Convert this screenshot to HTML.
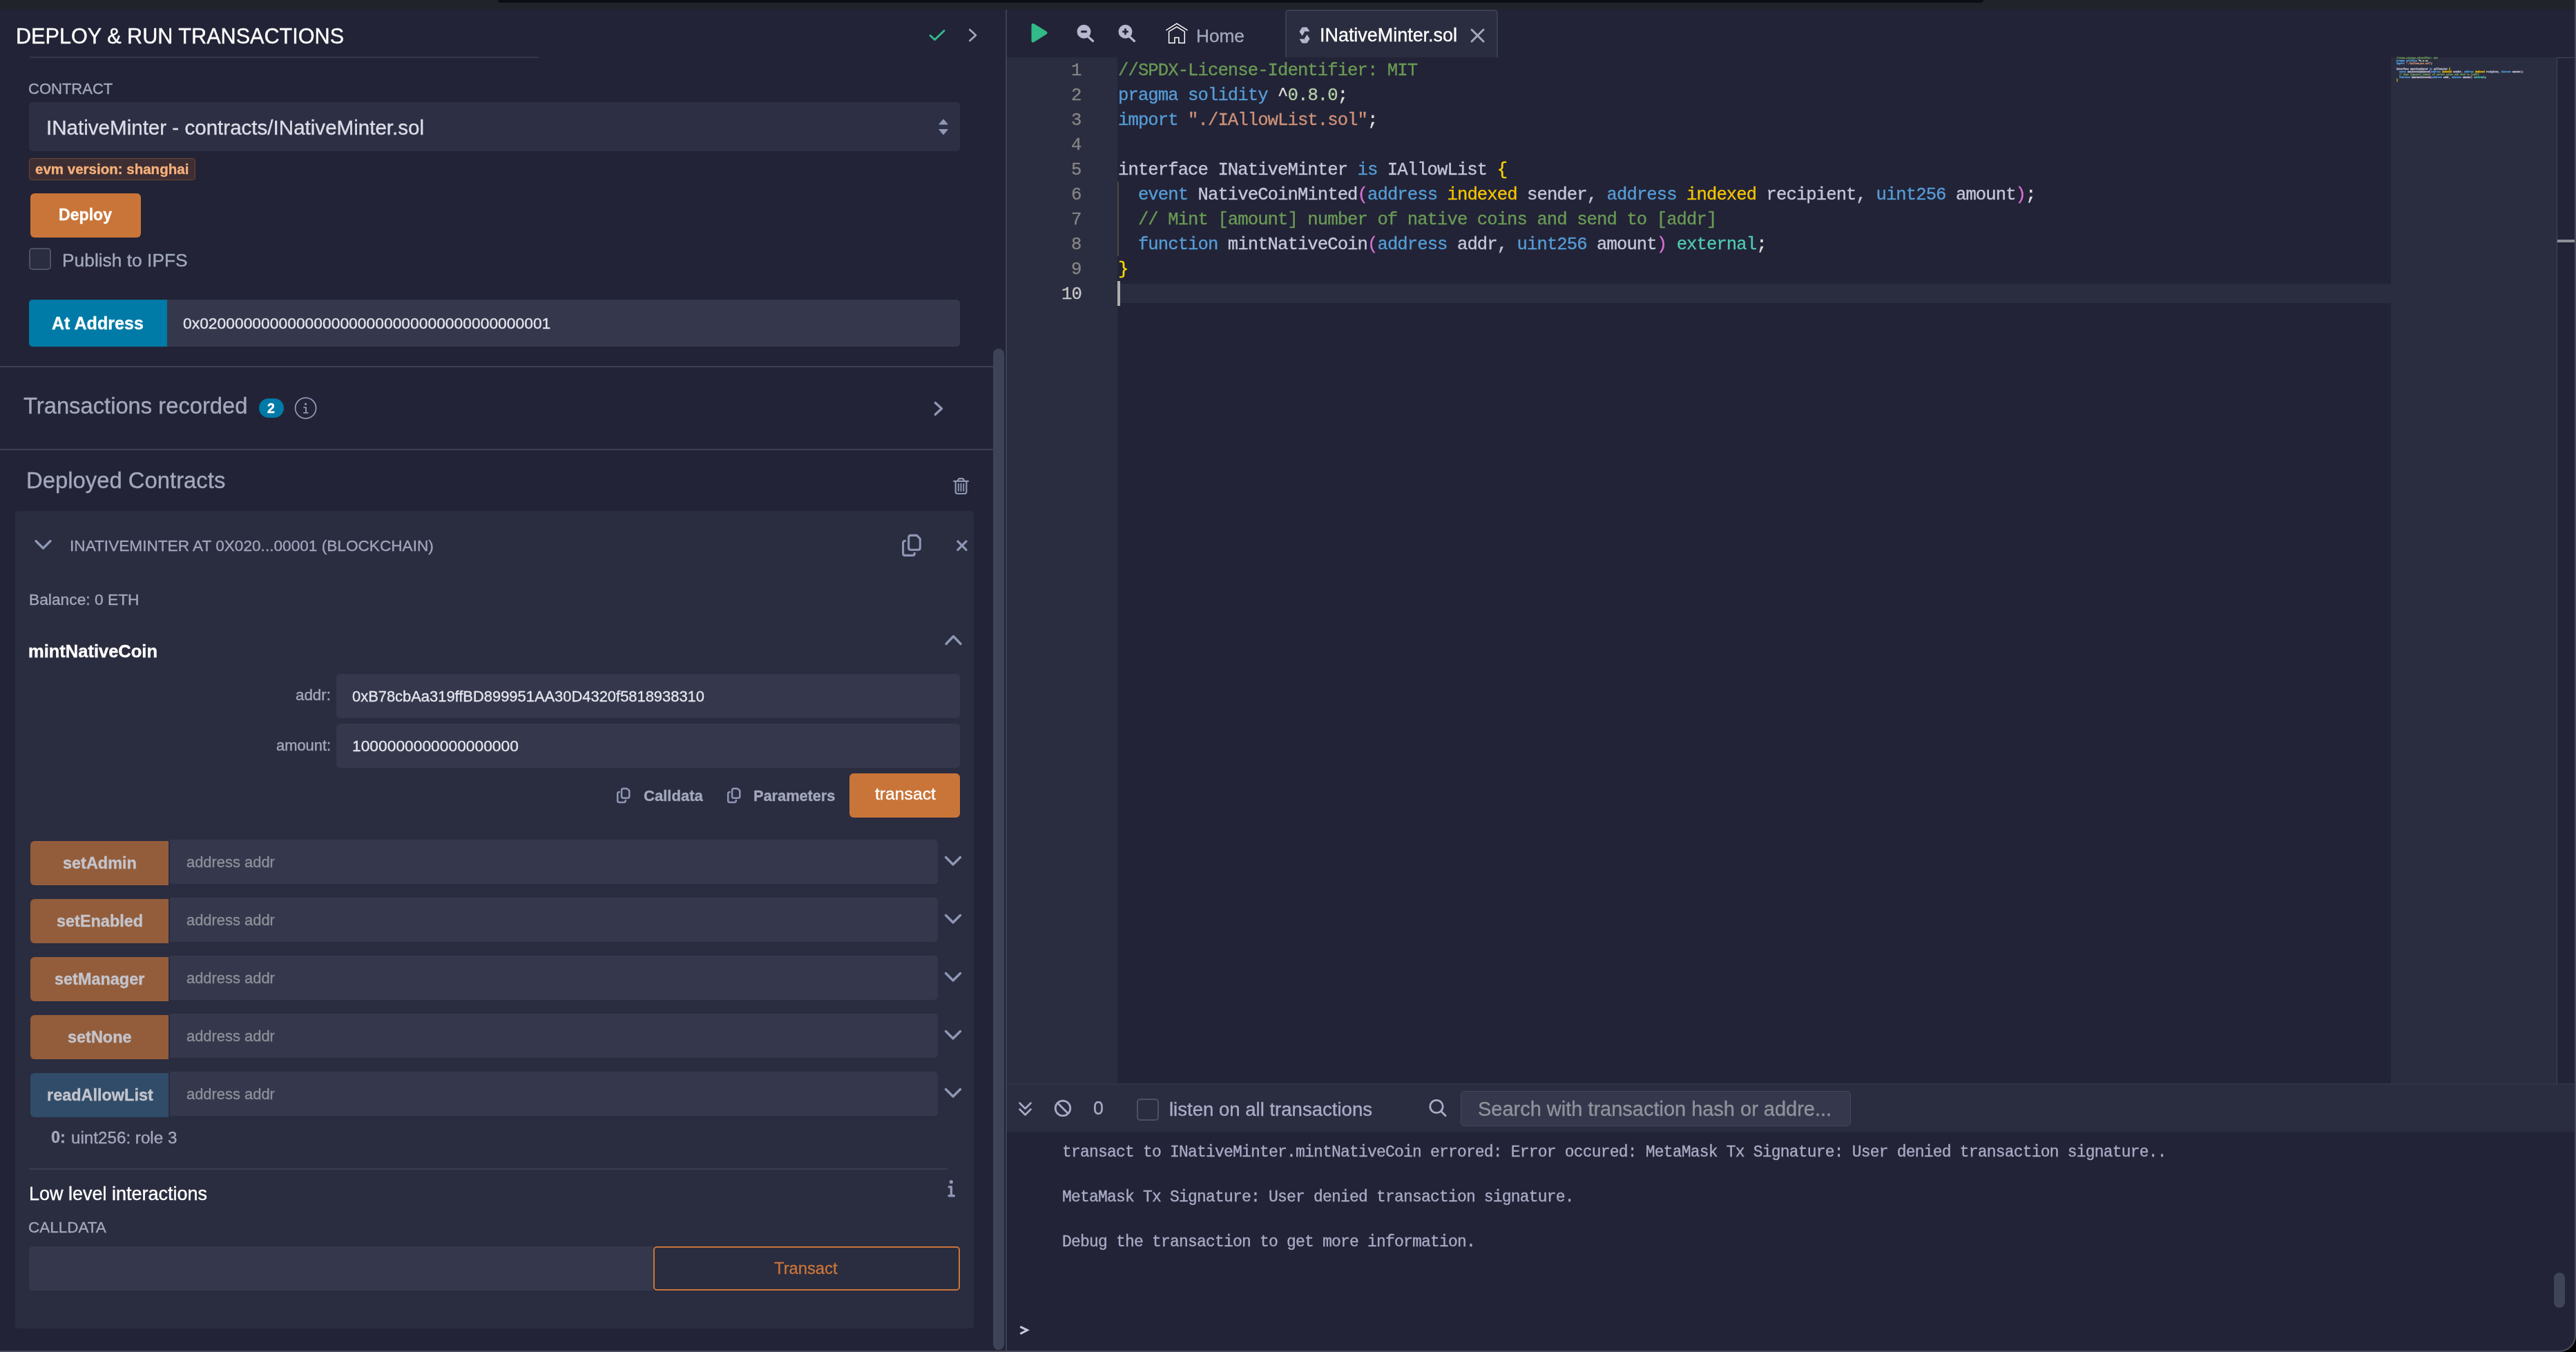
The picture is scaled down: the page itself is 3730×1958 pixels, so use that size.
<!DOCTYPE html>
<html><head><meta charset="utf-8">
<style>
*{margin:0;padding:0;box-sizing:border-box}
html,body{width:3730px;height:1958px;overflow:hidden;background:#000}
body{position:relative;font-family:"Liberation Sans",sans-serif}
.a{position:absolute}
.t{position:absolute;white-space:pre;line-height:1;will-change:transform;-webkit-text-stroke:0.35px currentColor}
svg{position:absolute;overflow:visible}
</style></head><body>
<div class="a" style="left:0px;top:0px;width:3730px;height:14px;background:#20232a;"></div>
<div class="a" style="left:721px;top:0px;width:2151px;height:4px;background:#0d0e13;border-radius:0 0 9px 9px"></div>
<div class="a" style="left:0;top:14px;width:3730px;height:1944px;background:#222336;border-bottom-right-radius:24px"></div>
<div class="t" style="left:23.2px;top:36.6px;font-size:30.61px;color:#ffffff;">DEPLOY &amp; RUN TRANSACTIONS</div>
<svg style="left:1345px;top:42px" width="24" height="18" viewBox="0 0 24 18"><path d="M2 9.5 L8.5 15.5 L22 2.5" fill="none" stroke="#32ba89" stroke-width="3" stroke-linecap="round" stroke-linejoin="round"/></svg>
<svg style="left:1402px;top:41px" width="14" height="20" viewBox="0 0 14 20"><path d="M2.2 2 L11 10 L2.2 18" fill="none" stroke="#a3a8bd" stroke-width="2.6" stroke-linecap="round" stroke-linejoin="round"/></svg>
<div class="a" style="left:43px;top:82px;width:738px;height:2px;background:#34374b;"></div>
<div class="t" style="left:40.7px;top:117.8px;font-size:22.03px;color:#a3a8bd;">CONTRACT</div>
<div class="a" style="left:42px;top:148px;width:1348px;height:71px;background:#2d2f44;border-radius:5px"></div>
<div class="t" style="left:66.7px;top:170.0px;font-size:29.57px;color:#dcdde8;">INativeMinter - contracts/INativeMinter.sol</div>
<svg style="left:1359px;top:172px" width="14" height="24" viewBox="0 0 14 24"><path d="M7 0.8 L13.2 8 L0.8 8 Z M7 23 L13.2 15.5 L0.8 15.5 Z" fill="#8e97b5" stroke="#8e97b5" stroke-width="1" stroke-linejoin="round"/></svg>
<div class="a" style="left:42px;top:229px;width:241px;height:32px;background:#3d2e33;border:1.5px solid #6e4633;border-radius:4px"></div>
<div class="t" style="left:50.7px;top:234.8px;font-size:20.53px;font-weight:bold;color:#f7b07a;">evm version: shanghai</div>
<div class="a" style="left:44px;top:280px;width:160px;height:64px;background:#c97539;border-radius:6px"></div>
<div class="t" style="left:85.3px;top:299.6px;font-size:23.11px;font-weight:bold;color:#ffffff;">Deploy</div>
<div class="a" style="left:42px;top:359px;width:32px;height:32px;background:#2a2c3f;border:2px solid #4d5066;border-radius:5px"></div>
<div class="t" style="left:89.7px;top:364.1px;font-size:26.37px;color:#a3a8bd;">Publish to IPFS</div>
<div class="a" style="left:42px;top:434px;width:1348px;height:68px;background:#35384c;border-radius:5px"></div>
<div class="a" style="left:42px;top:434px;width:200px;height:68px;background:#007aa6;border-radius:5px 0 0 5px"></div>
<div class="t" style="left:75.3px;top:456.3px;font-size:25.09px;font-weight:bold;color:#ffffff;">At Address</div>
<div class="t" style="left:265.3px;top:456.6px;font-size:22.85px;color:#e4e5ee;">0x0200000000000000000000000000000000000001</div>
<div class="a" style="left:0px;top:530px;width:1438px;height:2px;background:#3d4055;"></div>
<div class="t" style="left:33.7px;top:571.8px;font-size:32.74px;color:#a3a8bd;">Transactions recorded</div>
<div class="a" style="left:375px;top:577px;width:36px;height:28px;background:#007aa6;border-radius:14px"></div>
<div class="t" style="left:387.3px;top:582.4px;font-size:19.60px;font-weight:bold;color:#ffffff;">2</div>
<svg style="left:426px;top:575px" width="32" height="32" viewBox="0 0 32 32"><circle cx="16.6" cy="16.1" r="15" fill="none" stroke="#8e97b5" stroke-width="1.8"/><circle cx="16.6" cy="10.2" r="1.6" fill="#8e97b5"/><path d="M13.4 15.1 H17 V22.8 M13.2 22.9 H20.5" fill="none" stroke="#8e97b5" stroke-width="1.9"/></svg>
<svg style="left:1352px;top:581px" width="14" height="22" viewBox="0 0 14 22"><path d="M2.3 2.3 L11.5 10.8 L2.3 19.3" fill="none" stroke="#8e97b5" stroke-width="3.4" stroke-linecap="round" stroke-linejoin="round"/></svg>
<div class="a" style="left:0px;top:650px;width:1438px;height:2px;background:#3d4055;"></div>
<div class="t" style="left:37.5px;top:680.2px;font-size:32.83px;color:#a3a8bd;">Deployed Contracts</div>
<svg style="left:1380px;top:690px" width="24" height="28" viewBox="0 0 24 28"><path d="M1 6.9 H22 M6.5 6.4 L8.6 3.2 H14.4 L16.5 6.4 M3.7 7 V22 Q3.7 25 6.7 25 H16.4 Q19.4 25 19.4 22 V7" fill="none" stroke="#8e97b5" stroke-width="2.2" stroke-linecap="round" stroke-linejoin="round"/><path d="M7.8 10.7 V21 M11.5 10.7 V21 M15.3 10.7 V21" stroke="#8e97b5" stroke-width="1.9" stroke-linecap="round"/></svg>
<div class="a" style="left:22px;top:740px;width:1388px;height:1184px;background:#2a2c3f;border-radius:5px"></div>
<svg style="left:50px;top:781px" width="25" height="16" viewBox="0 0 25 16"><path d="M2 2.5 L12.5 13 L23 2.5" fill="none" stroke="#8e97b5" stroke-width="3.4" stroke-linecap="round" stroke-linejoin="round"/></svg>
<div class="t" style="left:101.2px;top:779.8px;font-size:22.63px;color:#a0a5bd;">INATIVEMINTER AT 0X020...00001 (BLOCKCHAIN)</div>
<svg style="left:1304px;top:772px" width="32" height="36" viewBox="0 0 32 36"><path d="M14.7 3.4 H23.6 L28.3 8.4 V21.2 Q28.3 24.2 25.3 24.2 H14.7 Q11.7 24.2 11.7 21.2 V6.4 Q11.7 3.4 14.7 3.4 Z M7.8 11.3 H6.6 Q3.6 11.3 3.6 14.3 V29.4 Q3.6 32.4 6.6 32.4 H17.3 Q20.3 32.4 20.3 29.4 V27.9" fill="none" stroke="#8e97b5" stroke-width="3.1" stroke-linejoin="round"/></svg>
<svg style="left:1385px;top:782px" width="17" height="16" viewBox="0 0 17 16"><path d="M1.8 1.9 L14.1 14.4 M14.1 1.9 L1.8 14.4" fill="none" stroke="#8e97b5" stroke-width="3.2" stroke-linecap="round"/></svg>
<div class="t" style="left:41.7px;top:856.7px;font-size:22.79px;color:#a3a8bd;">Balance: 0 ETH</div>
<svg style="left:1368px;top:918px" width="25" height="17" viewBox="0 0 25 17"><path d="M2 14.5 L12.5 3.5 L23 14.5" fill="none" stroke="#8e97b5" stroke-width="3.4" stroke-linecap="round" stroke-linejoin="round"/></svg>
<div class="t" style="left:41.2px;top:931.4px;font-size:25.51px;font-weight:bold;color:#ffffff;">mintNativeCoin</div>
<div class="t" style="left:427.7px;top:996.1px;font-size:22.37px;color:#a3a8bd;">addr:</div>
<div class="a" style="left:487px;top:976px;width:903px;height:64px;background:#35384c;border-radius:5px"></div>
<div class="t" style="left:509.7px;top:997.5px;font-size:21.91px;color:#e4e5ee;">0xB78cbAa319ffBD899951AA30D4320f5818938310</div>
<div class="t" style="left:399.7px;top:1068.5px;font-size:21.88px;color:#a3a8bd;">amount:</div>
<div class="a" style="left:487px;top:1048px;width:903px;height:64px;background:#35384c;border-radius:5px"></div>
<div class="t" style="left:509.7px;top:1068.7px;font-size:22.80px;color:#e4e5ee;">1000000000000000000</div>
<svg style="left:892px;top:1140px" width="22" height="24" viewBox="0 0 22 24"><path d="M10.55 2.05 H15.6 L19.25 5.0 V13.35 Q19.25 15.85 16.75 15.85 H10.55 Q8.05 15.85 8.05 13.35 V4.55 Q8.05 2.05 10.55 2.05 Z M4.7 7.1 Q2.2 7.1 2.2 9.6 V19.4 Q2.2 21.9 4.7 21.9 H11.3 Q13.8 21.9 13.8 19.4 V19" fill="none" stroke="#8e97b5" stroke-width="2.5" stroke-linejoin="round" stroke-linecap="round"/></svg>
<div class="t" style="left:931.7px;top:1141.8px;font-size:22.05px;font-weight:bold;color:#a3a8bd;">Calldata</div>
<svg style="left:1052px;top:1140px" width="22" height="24" viewBox="0 0 22 24"><path d="M10.55 2.05 H15.6 L19.25 5.0 V13.35 Q19.25 15.85 16.75 15.85 H10.55 Q8.05 15.85 8.05 13.35 V4.55 Q8.05 2.05 10.55 2.05 Z M4.7 7.1 Q2.2 7.1 2.2 9.6 V19.4 Q2.2 21.9 4.7 21.9 H11.3 Q13.8 21.9 13.8 19.4 V19" fill="none" stroke="#8e97b5" stroke-width="2.5" stroke-linejoin="round" stroke-linecap="round"/></svg>
<div class="t" style="left:1091.2px;top:1142.1px;font-size:21.74px;font-weight:bold;color:#a3a8bd;">Parameters</div>
<div class="a" style="left:1230px;top:1120px;width:160px;height:64px;background:#c97539;border-radius:6px"></div>
<div class="t" style="left:1266.7px;top:1138.1px;font-size:24.72px;color:#ffffff;">transact</div>
<div class="a" style="left:44px;top:1218px;width:200px;height:64px;background:#935d3b;border-radius:6px 0 0 6px"></div>
<div class="t" style="left:91.0px;top:1239.3px;font-size:23.46px;font-weight:bold;color:#c4c4cc;">setAdmin</div>
<div class="a" style="left:246px;top:1216px;width:1112px;height:64px;background:#35384c;border-radius:0 5px 5px 0"></div>
<div class="t" style="left:270.0px;top:1238.4px;font-size:21.92px;color:#8c9199;">address addr</div>
<svg style="left:1367px;top:1239px" width="26" height="17" viewBox="0 0 26 17"><path d="M2.5 2.5 L13 13 L23.5 2.5" fill="none" stroke="#8e97b5" stroke-width="3.4" stroke-linecap="round" stroke-linejoin="round"/></svg>
<div class="a" style="left:44px;top:1302px;width:200px;height:64px;background:#935d3b;border-radius:6px 0 0 6px"></div>
<div class="t" style="left:82.0px;top:1323.3px;font-size:23.46px;font-weight:bold;color:#c4c4cc;">setEnabled</div>
<div class="a" style="left:246px;top:1300px;width:1112px;height:64px;background:#35384c;border-radius:0 5px 5px 0"></div>
<div class="t" style="left:270.0px;top:1322.4px;font-size:21.92px;color:#8c9199;">address addr</div>
<svg style="left:1367px;top:1323px" width="26" height="17" viewBox="0 0 26 17"><path d="M2.5 2.5 L13 13 L23.5 2.5" fill="none" stroke="#8e97b5" stroke-width="3.4" stroke-linecap="round" stroke-linejoin="round"/></svg>
<div class="a" style="left:44px;top:1386px;width:200px;height:64px;background:#935d3b;border-radius:6px 0 0 6px"></div>
<div class="t" style="left:79.3px;top:1407.3px;font-size:23.46px;font-weight:bold;color:#c4c4cc;">setManager</div>
<div class="a" style="left:246px;top:1384px;width:1112px;height:64px;background:#35384c;border-radius:0 5px 5px 0"></div>
<div class="t" style="left:270.0px;top:1406.4px;font-size:21.92px;color:#8c9199;">address addr</div>
<svg style="left:1367px;top:1407px" width="26" height="17" viewBox="0 0 26 17"><path d="M2.5 2.5 L13 13 L23.5 2.5" fill="none" stroke="#8e97b5" stroke-width="3.4" stroke-linecap="round" stroke-linejoin="round"/></svg>
<div class="a" style="left:44px;top:1470px;width:200px;height:64px;background:#935d3b;border-radius:6px 0 0 6px"></div>
<div class="t" style="left:98.2px;top:1491.3px;font-size:23.46px;font-weight:bold;color:#c4c4cc;">setNone</div>
<div class="a" style="left:246px;top:1468px;width:1112px;height:64px;background:#35384c;border-radius:0 5px 5px 0"></div>
<div class="t" style="left:270.0px;top:1490.4px;font-size:21.92px;color:#8c9199;">address addr</div>
<svg style="left:1367px;top:1491px" width="26" height="17" viewBox="0 0 26 17"><path d="M2.5 2.5 L13 13 L23.5 2.5" fill="none" stroke="#8e97b5" stroke-width="3.4" stroke-linecap="round" stroke-linejoin="round"/></svg>
<div class="a" style="left:44px;top:1554px;width:200px;height:64px;background:#304c69;border-radius:6px 0 0 6px"></div>
<div class="t" style="left:67.5px;top:1575.3px;font-size:23.46px;font-weight:bold;color:#c4c4cc;">readAllowList</div>
<div class="a" style="left:246px;top:1552px;width:1112px;height:64px;background:#35384c;border-radius:0 5px 5px 0"></div>
<div class="t" style="left:270.0px;top:1574.4px;font-size:21.92px;color:#8c9199;">address addr</div>
<svg style="left:1367px;top:1575px" width="26" height="17" viewBox="0 0 26 17"><path d="M2.5 2.5 L13 13 L23.5 2.5" fill="none" stroke="#8e97b5" stroke-width="3.4" stroke-linecap="round" stroke-linejoin="round"/></svg>
<div class="t" style="left:73.7px;top:1636.0px;font-size:23.60px;font-weight:bold;color:#a3a8bd;">0:</div>
<div class="t" style="left:103.2px;top:1635.5px;font-size:24.21px;color:#a3a8bd;">uint256: role 3</div>
<div class="a" style="left:42px;top:1692px;width:1330px;height:2px;background:#3a3d52;"></div>
<div class="t" style="left:41.7px;top:1716.2px;font-size:26.99px;color:#ffffff;">Low level interactions</div>
<svg style="left:1370px;top:1708px" width="14" height="26" viewBox="0 0 14 26"><circle cx="7.3" cy="3.7" r="2.6" fill="#8e97b5"/><path d="M4.2 10.9 H7.4 V23.5 M4 23.7 H11.5" fill="none" stroke="#8e97b5" stroke-width="3.4" stroke-linecap="round" stroke-linejoin="round"/></svg>
<div class="t" style="left:40.7px;top:1766.9px;font-size:22.47px;color:#a3a8bd;">CALLDATA</div>
<div class="a" style="left:42px;top:1805px;width:904px;height:64px;background:#35384c;border-radius:5px 0 0 5px"></div>
<div class="a" style="left:946px;top:1805px;width:444px;height:64px;background:transparent;border:2px solid #c97539;border-radius:5px"></div>
<div class="t" style="left:1121.1px;top:1824.9px;font-size:23.76px;color:#c97539;">Transact</div>
<div class="a" style="left:1438px;top:505px;width:16px;height:1450px;background:#3f4358;border-radius:8px"></div>
<div class="a" style="left:1456px;top:14px;width:2px;height:1944px;background:#3c4054;"></div>
<svg style="left:1491px;top:33px" width="26" height="30" viewBox="0 0 26 30"><path d="M3.5 3.5 Q3.5 1 6 2.4 L23.5 13 Q25.5 14.5 23.5 16 L6 27 Q3.5 28.5 3.5 26 Z" fill="#32ba89" stroke="#32ba89" stroke-width="2" stroke-linejoin="round"/></svg>
<svg style="left:1558px;top:34px" width="28" height="28" viewBox="0 0 28 28"><circle cx="11.5" cy="11.8" r="10" fill="#b7b8cf"/><path d="M17.5 19 L24.5 25.5" stroke="#b7b8cf" stroke-width="3.2" stroke-linecap="round"/><path d="M7.2 11.8 H15.8" stroke="#222336" stroke-width="3"/></svg>
<svg style="left:1618px;top:34px" width="28" height="28" viewBox="0 0 28 28"><circle cx="11.5" cy="11.8" r="10" fill="#b7b8cf"/><path d="M17.5 19 L24.5 25.5" stroke="#b7b8cf" stroke-width="3.2" stroke-linecap="round"/><path d="M7.2 11.8 H15.8 M11.5 7.3 V16.3" stroke="#222336" stroke-width="2.8"/></svg>
<svg style="left:1688px;top:33px" width="33" height="31" viewBox="0 0 33 31"><path d="M0.4 10.8 L15.9 1.2 L31.6 10.8 M4.6 12.6 L15.9 5.8 L27.3 12.6 M4.6 12.6 V29.2 H12.9 V21.6 H18.9 V29.2 H27.3 V12.6" fill="none" stroke="#ffffff" stroke-width="1.5" stroke-linejoin="miter"/></svg>
<div class="t" style="left:1731.7px;top:39.1px;font-size:26.22px;color:#a3a8bd;">Home</div>
<div class="a" style="left:1861px;top:14px;width:308px;height:70px;background:#2a2c3f;border:2px solid #3a3d52;border-bottom:none;border-radius:5px 5px 0 0"></div>
<svg style="left:1881px;top:39px" width="16" height="24" viewBox="0 0 16 24"><path d="M4.5 0.5 L11.5 0.5 L15.5 6.5 L8.5 6.5 Z M0.5 6.8 L4.5 0.6 L8.3 6.8 L4.5 13 Z M11.5 23.5 L4.5 23.5 L0.5 17.5 L7.5 17.5 Z M15.5 17.2 L11.5 23.4 L7.7 17.2 L11.5 11 Z" fill="#b7b8cf"/></svg>
<div class="t" style="left:1911.2px;top:38.2px;font-size:26.93px;color:#ffffff;">INativeMinter.sol</div>
<svg style="left:2129px;top:41px" width="21" height="21" viewBox="0 0 21 21"><path d="M2 2 L19 19 M19 2 L2 19" stroke="#a3a8bd" stroke-width="3" stroke-linecap="round"/></svg>
<div class="a" style="left:1458px;top:83px;width:160px;height:1486px;background:#2a2c3f;"></div>
<div class="a" style="left:1618px;top:83px;width:1844px;height:1486px;background:#222336;"></div>
<div class="a" style="left:3462px;top:83px;width:241px;height:1486px;background:#2a2c3f;"></div>
<div class="a" style="left:3702px;top:83px;width:1px;height:1486px;background:#44475a;"></div>
<div class="a" style="left:3703px;top:83px;width:25px;height:1px;background:#44475a;"></div>
<div class="a" style="left:3703px;top:347px;width:27px;height:4px;background:#8f9196;"></div>
<div class="a" style="left:1618px;top:411px;width:1844px;height:28px;background:#2a2c3f;"></div>
<div class="a" style="left:1618px;top:407px;width:4px;height:36px;background:#aeafad;"></div>
<div class="a" style="left:1618px;top:263px;width:2px;height:108px;background:#4a4a3c;"></div>
<div class="t" style="left:1618.5px;top:90.4px;font-size:25.6px;letter-spacing:-0.920px;font-family:'Liberation Mono',monospace"><span style="color:#6a9955">//SPDX-License-Identifier: MIT</span></div>
<div class="t" style="left:1551.1px;top:90.4px;font-size:25.6px;letter-spacing:-0.920px;font-family:'Liberation Mono',monospace;color:#858585">1</div>
<div class="t" style="left:1618.5px;top:126.4px;font-size:25.6px;letter-spacing:-0.920px;font-family:'Liberation Mono',monospace"><span style="color:#569cd6">pragma</span><span style="color:#c5c6da"> </span><span style="color:#569cd6">solidity</span><span style="color:#e0e0e0"> ^</span><span style="color:#b5cea8">0.8.0</span><span style="color:#e0e0e0">;</span></div>
<div class="t" style="left:1551.1px;top:126.4px;font-size:25.6px;letter-spacing:-0.920px;font-family:'Liberation Mono',monospace;color:#858585">2</div>
<div class="t" style="left:1618.5px;top:162.4px;font-size:25.6px;letter-spacing:-0.920px;font-family:'Liberation Mono',monospace"><span style="color:#569cd6">import</span><span style="color:#c5c6da"> </span><span style="color:#ce9178">&quot;./IAllowList.sol&quot;</span><span style="color:#e0e0e0">;</span></div>
<div class="t" style="left:1551.1px;top:162.4px;font-size:25.6px;letter-spacing:-0.920px;font-family:'Liberation Mono',monospace;color:#858585">3</div>
<div class="t" style="left:1618.5px;top:198.4px;font-size:25.6px;letter-spacing:-0.920px;font-family:'Liberation Mono',monospace"></div>
<div class="t" style="left:1551.1px;top:198.4px;font-size:25.6px;letter-spacing:-0.920px;font-family:'Liberation Mono',monospace;color:#858585">4</div>
<div class="t" style="left:1618.5px;top:234.4px;font-size:25.6px;letter-spacing:-0.920px;font-family:'Liberation Mono',monospace"><span style="color:#c5c6da">interface INativeMinter </span><span style="color:#569cd6">is</span><span style="color:#c5c6da"> IAllowList </span><span style="color:#ffd700">{</span></div>
<div class="t" style="left:1551.1px;top:234.4px;font-size:25.6px;letter-spacing:-0.920px;font-family:'Liberation Mono',monospace;color:#858585">5</div>
<div class="t" style="left:1618.5px;top:270.4px;font-size:25.6px;letter-spacing:-0.920px;font-family:'Liberation Mono',monospace"><span style="color:#569cd6">  event</span><span style="color:#c5c6da"> NativeCoinMinted</span><span style="color:#da70d6">(</span><span style="color:#569cd6">address</span><span style="color:#c5c6da"> </span><span style="color:#f5c400">indexed</span><span style="color:#c5c6da"> sender, </span><span style="color:#569cd6">address</span><span style="color:#c5c6da"> </span><span style="color:#f5c400">indexed</span><span style="color:#c5c6da"> recipient, </span><span style="color:#569cd6">uint256</span><span style="color:#c5c6da"> amount</span><span style="color:#da70d6">)</span><span style="color:#e0e0e0">;</span></div>
<div class="t" style="left:1551.1px;top:270.4px;font-size:25.6px;letter-spacing:-0.920px;font-family:'Liberation Mono',monospace;color:#858585">6</div>
<div class="t" style="left:1618.5px;top:306.4px;font-size:25.6px;letter-spacing:-0.920px;font-family:'Liberation Mono',monospace"><span style="color:#6a9955">  // Mint [amount] number of native coins and send to [addr]</span></div>
<div class="t" style="left:1551.1px;top:306.4px;font-size:25.6px;letter-spacing:-0.920px;font-family:'Liberation Mono',monospace;color:#858585">7</div>
<div class="t" style="left:1618.5px;top:342.4px;font-size:25.6px;letter-spacing:-0.920px;font-family:'Liberation Mono',monospace"><span style="color:#569cd6">  function</span><span style="color:#c5c6da"> mintNativeCoin</span><span style="color:#da70d6">(</span><span style="color:#569cd6">address</span><span style="color:#c5c6da"> addr, </span><span style="color:#569cd6">uint256</span><span style="color:#c5c6da"> amount</span><span style="color:#da70d6">)</span><span style="color:#c5c6da"> </span><span style="color:#4ec9b0">external</span><span style="color:#e0e0e0">;</span></div>
<div class="t" style="left:1551.1px;top:342.4px;font-size:25.6px;letter-spacing:-0.920px;font-family:'Liberation Mono',monospace;color:#858585">8</div>
<div class="t" style="left:1618.5px;top:378.4px;font-size:25.6px;letter-spacing:-0.920px;font-family:'Liberation Mono',monospace"><span style="color:#ffd700">}</span></div>
<div class="t" style="left:1551.1px;top:378.4px;font-size:25.6px;letter-spacing:-0.920px;font-family:'Liberation Mono',monospace;color:#858585">9</div>
<div class="t" style="left:1618.5px;top:414.4px;font-size:25.6px;letter-spacing:-0.920px;font-family:'Liberation Mono',monospace"></div>
<div class="t" style="left:1536.6px;top:414.4px;font-size:25.6px;letter-spacing:-0.920px;font-family:'Liberation Mono',monospace;color:#c6c6c6">10</div>
<div class="t" style="left:3470px;top:82.60px;font-size:3.34px;font-family:'Liberation Mono',monospace;font-weight:bold;opacity:0.9"><span style="color:#6a9955">//SPDX-License-Identifier: MIT</span></div>
<div class="t" style="left:3470px;top:86.68px;font-size:3.34px;font-family:'Liberation Mono',monospace;font-weight:bold;opacity:0.9"><span style="color:#569cd6">pragma</span><span style="color:#c5c6da"> </span><span style="color:#569cd6">solidity</span><span style="color:#e0e0e0"> ^</span><span style="color:#b5cea8">0.8.0</span><span style="color:#e0e0e0">;</span></div>
<div class="t" style="left:3470px;top:90.76px;font-size:3.34px;font-family:'Liberation Mono',monospace;font-weight:bold;opacity:0.9"><span style="color:#569cd6">import</span><span style="color:#c5c6da"> </span><span style="color:#ce9178">&quot;./IAllowList.sol&quot;</span><span style="color:#e0e0e0">;</span></div>
<div class="t" style="left:3470px;top:94.84px;font-size:3.34px;font-family:'Liberation Mono',monospace;font-weight:bold;opacity:0.9"></div>
<div class="t" style="left:3470px;top:98.92px;font-size:3.34px;font-family:'Liberation Mono',monospace;font-weight:bold;opacity:0.9"><span style="color:#c5c6da">interface INativeMinter </span><span style="color:#569cd6">is</span><span style="color:#c5c6da"> IAllowList </span><span style="color:#ffd700">{</span></div>
<div class="t" style="left:3470px;top:103.00px;font-size:3.34px;font-family:'Liberation Mono',monospace;font-weight:bold;opacity:0.9"><span style="color:#569cd6">  event</span><span style="color:#c5c6da"> NativeCoinMinted</span><span style="color:#da70d6">(</span><span style="color:#569cd6">address</span><span style="color:#c5c6da"> </span><span style="color:#f5c400">indexed</span><span style="color:#c5c6da"> sender, </span><span style="color:#569cd6">address</span><span style="color:#c5c6da"> </span><span style="color:#f5c400">indexed</span><span style="color:#c5c6da"> recipient, </span><span style="color:#569cd6">uint256</span><span style="color:#c5c6da"> amount</span><span style="color:#da70d6">)</span><span style="color:#e0e0e0">;</span></div>
<div class="t" style="left:3470px;top:107.08px;font-size:3.34px;font-family:'Liberation Mono',monospace;font-weight:bold;opacity:0.9"><span style="color:#6a9955">  // Mint [amount] number of native coins and send to [addr]</span></div>
<div class="t" style="left:3470px;top:111.16px;font-size:3.34px;font-family:'Liberation Mono',monospace;font-weight:bold;opacity:0.9"><span style="color:#569cd6">  function</span><span style="color:#c5c6da"> mintNativeCoin</span><span style="color:#da70d6">(</span><span style="color:#569cd6">address</span><span style="color:#c5c6da"> addr, </span><span style="color:#569cd6">uint256</span><span style="color:#c5c6da"> amount</span><span style="color:#da70d6">)</span><span style="color:#c5c6da"> </span><span style="color:#4ec9b0">external</span><span style="color:#e0e0e0">;</span></div>
<div class="t" style="left:3470px;top:115.24px;font-size:3.34px;font-family:'Liberation Mono',monospace;font-weight:bold;opacity:0.9"><span style="color:#ffd700">}</span></div>
<div class="t" style="left:3470px;top:119.32px;font-size:3.34px;font-family:'Liberation Mono',monospace;font-weight:bold;opacity:0.9"></div>
<div class="a" style="left:1458px;top:1569px;width:2270px;height:70px;background:#2a2c3f;"></div>
<div class="a" style="left:1458px;top:1569px;width:2270px;height:2px;background:#313447;"></div>
<svg style="left:1474px;top:1595px" width="21" height="22" viewBox="0 0 21 22"><path d="M2.5 2.5 L10.5 10.5 L18.5 2.5 M2.5 11.5 L10.5 19.5 L18.5 11.5" fill="none" stroke="#a9abc8" stroke-width="2.6" stroke-linecap="round" stroke-linejoin="round"/></svg>
<svg style="left:1526px;top:1592px" width="26" height="26" viewBox="0 0 26 26"><circle cx="13" cy="13" r="10.8" fill="none" stroke="#a9abc8" stroke-width="2.8"/><path d="M5.5 5.5 L20.5 20.5" stroke="#a9abc8" stroke-width="2.8"/></svg>
<div class="t" style="left:1582.7px;top:1592.3px;font-size:26.79px;color:#a9abc8;">0</div>
<div class="a" style="left:1646px;top:1591px;width:32px;height:32px;background:#2a2c3f;border:2px solid #4d5066;border-radius:5px"></div>
<div class="t" style="left:1692.7px;top:1592.7px;font-size:27.55px;color:#a9abc8;">listen on all transactions</div>
<svg style="left:2068px;top:1591px" width="28" height="28" viewBox="0 0 28 28"><circle cx="12" cy="11.5" r="9.2" fill="none" stroke="#a9abc8" stroke-width="2.8"/><path d="M18.6 18.2 L25 24.8" stroke="#a9abc8" stroke-width="2.8" stroke-linecap="round"/></svg>
<div class="a" style="left:2115px;top:1580px;width:565px;height:51px;background:#35384c;border:1.5px solid #44475a;border-radius:5px"></div>
<div class="t" style="left:2140.3px;top:1591.7px;font-size:28.98px;color:#8e939b;">Search with transaction hash or addre...</div>
<div class="t" style="left:1537.5px;top:1657.9px;font-size:23.0px;letter-spacing:-0.805px;font-family:'Liberation Mono',monospace;color:#a9abc6">transact to INativeMinter.mintNativeCoin errored: Error occured: MetaMask Tx Signature: User denied transaction signature..</div>
<div class="t" style="left:1537.5px;top:1722.9px;font-size:23.0px;letter-spacing:-0.805px;font-family:'Liberation Mono',monospace;color:#a9abc6">MetaMask Tx Signature: User denied transaction signature.</div>
<div class="t" style="left:1537.5px;top:1787.9px;font-size:23.0px;letter-spacing:-0.805px;font-family:'Liberation Mono',monospace;color:#a9abc6">Debug the transaction to get more information.</div>
<svg style="left:1475px;top:1919px" width="15" height="15" viewBox="0 0 15 15"><path d="M2.3 2.3 L12.6 7.3 L2.3 12.6" fill="none" stroke="#c8c9dc" stroke-width="3" stroke-linejoin="miter" stroke-miterlimit="3"/></svg>
<div class="a" style="left:3698px;top:1843px;width:16px;height:51px;background:#404459;border-radius:8px"></div>
<div class="a" style="left:-4px;top:14px;width:3734px;height:1944px;border-right:2px solid #4a4b5a;border-bottom:2px solid #4a4b5a;border-bottom-right-radius:24px;pointer-events:none"></div>
<div class="a" style="left:3728px;top:0px;width:2px;height:14px;background:#4a4b5a;"></div>
</body></html>
